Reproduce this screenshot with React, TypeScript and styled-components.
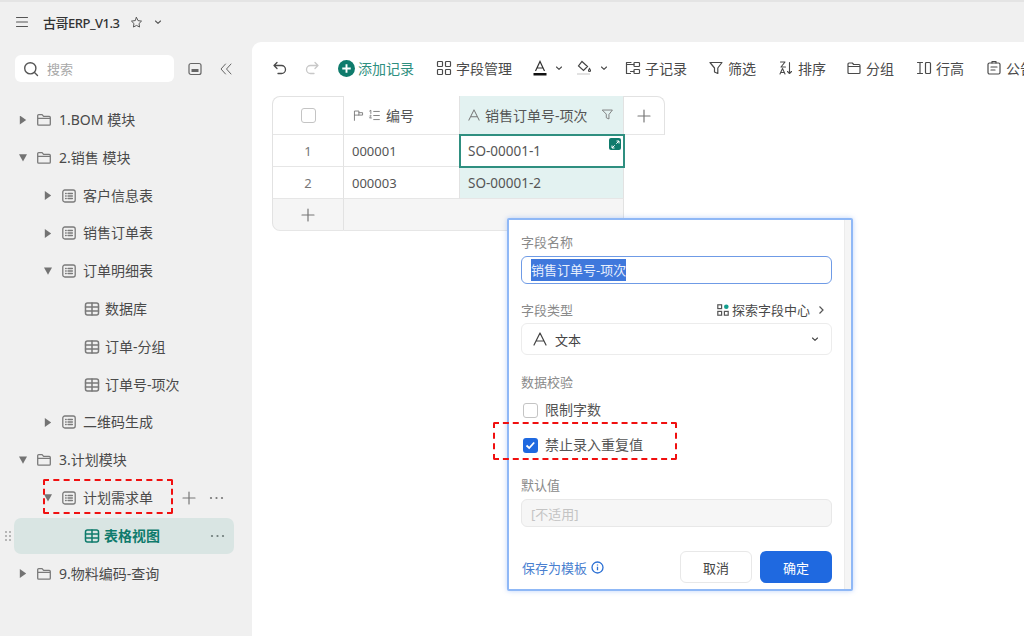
import React from 'react'
import styled, { createGlobalStyle } from 'styled-components'

const GlobalStyle = createGlobalStyle`
  html, body { margin: 0; padding: 0; height: 100%; overflow: hidden; background: #f0f0f0; }
  * { box-sizing: border-box; }
  body {
    font-family: "Noto Sans", "Noto Sans CJK SC", sans-serif;
    font-size: 14px;
    color: #3c3c3c;
  }
`

const Page = styled.div`
  position: relative;
  width: 1024px;
  height: 636px;
  overflow: hidden;
  display: flex;
  flex-direction: column;
  border-top: 2px solid #e4e4e4;
`

const TopBar = styled.header`
  height: 40px;
  flex: none;
  display: flex;
  align-items: center;
  padding: 0 0 0 15px;
  color: #555;
`

const BaseName = styled.span`
  margin-left: 14px;
  margin-right: 11px;
  font-size: 13px;
  font-weight: 500;
  letter-spacing: -0.5px;
  color: #333;
`

const TopChevron = styled.span`
  display: flex;
  margin-left: 10px;
`

const Body = styled.div`
  flex: 1;
  display: flex;
  min-height: 0;
`

const Sidebar = styled.aside`
  width: 252px;
  flex: none;
  position: relative;
`

const SearchRow = styled.div`
  display: flex;
  align-items: center;
  padding: 13px 0 0 15px;
  color: #666;
`

const SearchBox = styled.div`
  width: 159px;
  height: 27px;
  background: #fff;
  border-radius: 6px;
  display: flex;
  align-items: center;
  gap: 8px;
  padding-left: 8px;
  font-size: 13px;
  color: #555;
  margin-right: 14px;
`

const SearchHint = styled.span`
  color: #a8a8a8;
`

const CollapseBtn = styled.span`
  display: flex;
  margin-left: 17px;
`

const Tree = styled.nav`
  display: flex;
  flex-direction: column;
  gap: 7.8px;
  padding-top: 23px;
`

const Row = styled.div<{ $level: number; $active?: boolean }>`
  position: relative;
  height: ${({ $active }) => ($active ? '36px' : '30px')};
  margin: ${({ $active }) => ($active ? '-3px 18px -3px 14px' : '0')};
  padding-left: ${({ $level, $active }) =>
    $active ? '70px' : `${[19, 44, 84][$level]}px`};
  display: flex;
  align-items: center;
  color: ${({ $active }) => ($active ? '#0f7b6c' : '#4a4a4a')};
  font-weight: ${({ $active }) => ($active ? 700 : 400)};
  background: ${({ $active }) => ($active ? '#d9e5e3' : 'transparent')};
  border-radius: ${({ $active }) => ($active ? '7px' : '0')};
`

const Arrow = styled.span<{ $open?: boolean }>`
  width: 8px;
  height: 9px;
  flex: none;
  background: #737373;
  margin-right: 9px;
  clip-path: ${({ $open }) =>
    $open ? 'polygon(0 10%, 100% 10%, 50% 90%)' : 'polygon(10% 0, 90% 50%, 10% 100%)'};
`

const RowIcon = styled.span<{ $active?: boolean }>`
  display: flex;
  flex: none;
  margin-right: ${({ $active }) => ($active ? '6px' : '7px')};
  color: ${({ $active }) => ($active ? '#0f7b6c' : '#7a7a7a')};
`

const RowText = styled.span<{ $level: number }>`
  margin-left: ${({ $level }) => [0, -1, -2][$level]}px;
  padding-bottom: 2px;
  white-space: nowrap;
`

const RowActions = styled.div`
  position: absolute;
  left: 181px;
  top: 7px;
  display: flex;
  gap: 12px;
  align-items: center;
  color: #777;
`

const ActiveDots = styled.span`
  position: absolute;
  right: 9px;
  top: 16px;
  color: #6d7b79;
  display: flex;
`

const Grip = styled.span`
  position: absolute;
  left: -9px;
  top: 13px;
  display: flex;
  color: #9a9a9a;
`

const Main = styled.main`
  flex: 1;
  background: #fff;
  border-top-left-radius: 9px;
  min-width: 0;
  overflow: hidden;
`

const Toolbar = styled.div`
  height: 54px;
  display: flex;
  align-items: center;
  padding: 0 0 2px 20px;
  white-space: nowrap;
  color: #4a4a4a;
`

const ToolItem = styled.div<{ $gap?: number; $left: number; $accent?: boolean; $muted?: boolean }>`
  display: flex;
  align-items: center;
  flex: none;
  gap: ${({ $gap }) => $gap ?? 4}px;
  margin-left: ${({ $left }) => $left}px;
  color: ${({ $accent, $muted }) => ($accent ? '#2f8f80' : $muted ? '#c8c8c8' : '#4a4a4a')};
`

const SheetGrid = styled.div`
  margin-left: 20px;
  width: 393px;
  display: grid;
  grid-template-columns: 72px 116px 164px 41px;
  grid-template-rows: 39px 32px 32px 32px;
  font-size: 13px;
`

const Cell = styled.div<{
  $tint?: boolean
  $center?: boolean
  $selected?: boolean
  $grey?: boolean
  $tl?: boolean
  $tr?: boolean
  $bl?: boolean
  $corner?: boolean
  $wide?: boolean
}>`
  position: relative;
  display: flex;
  align-items: center;
  padding: ${({ $center }) => ($center ? '0' : '0 8px')};
  justify-content: ${({ $center }) => ($center ? 'center' : 'flex-start')};
  background: ${({ $tint, $grey }) => ($tint ? '#e3f2f1' : $grey ? '#f5f5f5' : '#fff')};
  color: ${({ $center }) => ($center ? '#777' : '#555')};
  border-right: 1px solid #e2e2e2;
  border-bottom: 1px solid #e6e6e6;
  border-top: ${({ $tl, $tr }) => ($tl || $tr ? '1px solid #e2e2e2' : 'none')};
  border-left: ${({ $tl, $bl }) => ($tl || $bl ? '1px solid #e2e2e2' : 'none')};
  border-top-left-radius: ${({ $tl }) => ($tl ? '8px' : '0')};
  border-top-right-radius: ${({ $tr }) => ($tr ? '8px' : '0')};
  border-bottom-left-radius: ${({ $corner }) => ($corner ? '8px' : '0')};
  ${({ $wide }) => ($wide ? 'grid-column: span 2;' : '')}
  ${({ $selected }) => ($selected ? 'outline: 2px solid #2f8f80; outline-offset: -1px; z-index: 1;' : '')}
`

const HeaderCellIcons = styled.span`
  display: flex;
  gap: 3px;
  color: #777;
`

const HeaderLabel = styled.span`
  margin-left: 5px;
  font-size: 14px;
  white-space: nowrap;
  color: #555;
`

const CodeText = styled.span`
  font-size: 13.5px;
`

const FilterMark = styled.span`
  position: absolute;
  right: 9px;
  top: 12px;
  color: #777;
  display: flex;
`

const ExpandBadge = styled.span`
  position: absolute;
  right: 2px;
  top: 3px;
  width: 12px;
  height: 12px;
  border-radius: 2px;
  background: #0f7b6c;
  display: flex;
  align-items: center;
  justify-content: center;
`

const Popover = styled.section`
  position: absolute;
  left: 507px;
  top: 216px;
  width: 346px;
  height: 373px;
  background: #fff;
  border: 2px solid #8fb8f6;
  box-shadow: 0 0 5px rgba(70, 130, 240, 0.35);
  border-radius: 2px;
  padding: 13px 19px 0 12px;
  &::after {
    content: '';
    position: absolute;
    top: 0;
    right: 0;
    bottom: 0;
    width: 6px;
    background: #f5f5f5;
    border-left: 1px solid #ececec;
  }
`

const FieldLabel = styled.div<{ $top?: number }>`
  font-size: 13px;
  line-height: 18px;
  color: #8a8a8a;
  margin-top: ${({ $top }) => $top ?? 0}px;
`

const NameInput = styled.div`
  height: 28px;
  margin-top: 5px;
  border: 1px solid #6f9be6;
  border-radius: 6px;
  display: flex;
  align-items: center;
  padding-left: 9px;
  font-size: 13px;
`

const Selection = styled.span`
  background: #3f78dc;
  color: #e8effc;
  line-height: 22px;
`

const LabelRow = styled.div`
  display: flex;
  justify-content: space-between;
  align-items: center;
  margin-top: 16px;
`

const ExploreLink = styled.div`
  display: flex;
  align-items: center;
  font-size: 13px;
  color: #4a4a4a;
  padding-right: 7px;
  gap: 3px;
`

const ExploreArrow = styled.svg`
  margin-left: 4px;
`

const TypeSelect = styled.div`
  height: 32px;
  margin-top: 4px;
  border: 1px solid #ececec;
  border-radius: 6px;
  display: flex;
  align-items: center;
  padding: 0 11px;
  font-size: 13px;
  color: #444;
  gap: 8px;
`

const Spacer = styled.span`
  flex: 1;
`

const CheckRow = styled.label<{ $top: number }>`
  display: flex;
  align-items: center;
  gap: 7px;
  margin-top: ${({ $top }) => $top}px;
  padding-left: 2px;
  font-size: 14px;
  line-height: 18px;
  color: #555;
`

const Tick = styled.span<{ $on?: boolean }>`
  width: 15px;
  height: 15px;
  border-radius: 3px;
  border: ${({ $on }) => ($on ? 'none' : '1px solid #c4c4c4')};
  background: ${({ $on }) => ($on ? '#1f69e0' : '#fff')};
  display: flex;
  align-items: center;
  justify-content: center;
  flex: none;
`

const DisabledInput = styled.div`
  height: 28px;
  margin-top: 5px;
  border: 1px solid #e8e8e8;
  border-radius: 6px;
  background: #f6f6f6;
  display: flex;
  align-items: center;
  padding-left: 9px;
  font-size: 13px;
  color: #c4c4c4;
`

const Footer = styled.div`
  display: flex;
  align-items: center;
  margin-top: 24px;
`

const TemplateLink = styled.div`
  display: flex;
  align-items: center;
  gap: 4px;
  font-size: 13px;
  color: #4a7fd0;
  margin-left: 1px;
  flex: 1;
`

const Btn = styled.button<{ $primary?: boolean }>`
  width: 72px;
  height: 32px;
  margin-left: ${({ $primary }) => ($primary ? '8px' : '0')};
  border-radius: 6px;
  font: inherit;
  font-size: 13px;
  border: ${({ $primary }) => ($primary ? 'none' : '1px solid #e8e8e8')};
  background: ${({ $primary }) => ($primary ? '#1f69e0' : '#fff')};
  color: ${({ $primary }) => ($primary ? '#fff' : '#444')};
`

const DashedBox = styled.div<{ $x: number; $y: number; $w: number; $h: number }>`
  position: absolute;
  left: ${({ $x }) => $x}px;
  top: ${({ $y }) => $y}px;
  width: ${({ $w }) => $w}px;
  height: ${({ $h }) => $h}px;
  border: 2px dashed #f01010;
  border-radius: 2px;
  pointer-events: none;
  z-index: 5;
`

const Svg: React.FC<{ size?: number; sw?: number; vb?: number; children: React.ReactNode }> = ({ size = 16, sw = 1.3, vb = 16, children }) => (
  <svg width={size} height={size} viewBox={`0 0 ${vb} ${vb}`} fill="none" stroke="currentColor" strokeWidth={sw} strokeLinecap="round" strokeLinejoin="round">
    {children}
  </svg>
)

const Folder = () => (
  <Svg>
    <path d="M1.7 12.2V3.6c0-.6.4-1 1-1h3.4l1.5 1.8h5.7c.6 0 1 .4 1 1v6.8c0 .6-.4 1-1 1H2.7c-.6 0-1-.4-1-1zM1.7 6.4h12.6" />
  </Svg>
)
const SheetIcon = () => (
  <Svg>
    <rect x="1.8" y="2" width="12.4" height="12" rx="2" />
    <path d="M4.6 5.5h.6M7 5.5h4.4M4.6 8h.6M7 8h4.4M4.6 10.5h.6M7 10.5h4.4" />
  </Svg>
)
const GridIcon = () => (
  <Svg sw={1.5}>
    <rect x="1.5" y="2" width="13" height="12" rx="2" />
    <path d="M1.5 6h13M1.5 10h13M8 2v12" />
  </Svg>
)
const Chevron = ({ size = 10 }: { size?: number }) => (
  <Svg size={size} vb={10} sw={1.1}>
    <path d="M2.5 4l2.5 2.4L7.5 4" />
  </Svg>
)
const Plus = ({ size = 16 }: { size?: number }) => (
  <Svg size={size} sw={1.2}>
    <path d="M8 2v12M2 8h12" />
  </Svg>
)
const Dots = () => (
  <svg width="15" height="4" viewBox="0 0 15 4" fill="currentColor">
    <circle cx="2" cy="2" r="1.1" />
    <circle cx="7.5" cy="2" r="1.1" />
    <circle cx="13" cy="2" r="1.1" />
  </svg>
)
const LetterA = ({ size = 14 }: { size?: number }) => (
  <Svg size={size} vb={14} sw={1.2}>
    <path d="M1 13L7 1l6 12M3.2 9h7.600" />
  </Svg>
)

const App: React.FC = () => (
  <Page>
    <GlobalStyle />
    <TopBar>
      <Svg size={14} vb={14} sw={1.1}>
        <path d="M1.5 2.5h11M1.5 7h11M1.5 11.5h11" />
      </Svg>
      <BaseName>古哥ERP_V1.3</BaseName>
      <Svg size={13} sw={1.2}>
        <path d="M8 1.8l1.9 3.9 4.3.6-3.1 3 .7 4.3L8 11.6l-3.8 2 .7-4.3-3.1-3 4.3-.6z" />
      </Svg>
      <TopChevron><Chevron /></TopChevron>
    </TopBar>
    <Body>
      <Sidebar>
        <SearchRow>
          <SearchBox>
            <Svg sw={1.4}>
              <circle cx="7.3" cy="7.3" r="5.6" />
              <path d="M11.5 11.5l3 3" />
            </Svg>
            <SearchHint>搜索</SearchHint>
          </SearchBox>
          <Svg size={14} vb={14} sw={1.2}>
            <rect x="1" y="1.5" width="12" height="11" rx="2" />
            <rect x="3.5" y="7" width="7" height="3" fill="currentColor" stroke="none" />
          </Svg>
          <CollapseBtn>
            <Svg size={14} vb={14} sw={1}>
              <path d="M6.5 2L2 7l4.5 5M12 2L7.5 7l4.5 5" />
            </Svg>
          </CollapseBtn>
        </SearchRow>
        <Tree>
          <Row $level={0}><Arrow /><RowIcon><Folder /></RowIcon><RowText $level={0}>1.BOM 模块</RowText></Row>
          <Row $level={0}><Arrow $open /><RowIcon><Folder /></RowIcon><RowText $level={0}>2.销售 模块</RowText></Row>
          <Row $level={1}><Arrow /><RowIcon><SheetIcon /></RowIcon><RowText $level={1}>客户信息表</RowText></Row>
          <Row $level={1}><Arrow /><RowIcon><SheetIcon /></RowIcon><RowText $level={1}>销售订单表</RowText></Row>
          <Row $level={1}><Arrow $open /><RowIcon><SheetIcon /></RowIcon><RowText $level={1}>订单明细表</RowText></Row>
          <Row $level={2}><RowIcon><GridIcon /></RowIcon><RowText $level={2}>数据库</RowText></Row>
          <Row $level={2}><RowIcon><GridIcon /></RowIcon><RowText $level={2}>订单-分组</RowText></Row>
          <Row $level={2}><RowIcon><GridIcon /></RowIcon><RowText $level={2}>订单号-项次</RowText></Row>
          <Row $level={1}><Arrow /><RowIcon><SheetIcon /></RowIcon><RowText $level={1}>二维码生成</RowText></Row>
          <Row $level={0}><Arrow $open /><RowIcon><Folder /></RowIcon><RowText $level={0}>3.计划模块</RowText></Row>
          <Row $level={1}>
            <Arrow $open /><RowIcon><SheetIcon /></RowIcon><RowText $level={1}>计划需求单</RowText>
            <RowActions><Plus /><Dots /></RowActions>
          </Row>
          <Row $level={2} $active>
            <Grip>
              <svg width="6" height="10" viewBox="0 0 6 10" fill="currentColor">
                <circle cx="1" cy="1" r="0.9" /><circle cx="5" cy="1" r="0.9" />
                <circle cx="1" cy="5" r="0.9" /><circle cx="5" cy="5" r="0.9" />
                <circle cx="1" cy="9" r="0.9" /><circle cx="5" cy="9" r="0.9" />
              </svg>
            </Grip>
            <RowIcon $active><GridIcon /></RowIcon>
            <RowText $level={2}>表格视图</RowText>
            <ActiveDots><Dots /></ActiveDots>
          </Row>
          <Row $level={0}><Arrow /><RowIcon><Folder /></RowIcon><RowText $level={0}>9.物料编码-查询</RowText></Row>
        </Tree>
      </Sidebar>
      <Main>
        <Toolbar>
          <ToolItem $left={0}>
            <Svg><path d="M5 2.5L2 5.5l3 3M2 5.5h7.5a3.5 3.5 0 0 1 0 8H6" /></Svg>
          </ToolItem>
          <ToolItem $left={16} $muted>
            <Svg><path d="M11 2.5l3 3-3 3M14 5.5H6.5a3.5 3.5 0 0 0 0 8H10" /></Svg>
          </ToolItem>
          <ToolItem $left={18} $gap={3} $accent>
            <svg width="17" height="17" viewBox="0 0 16 16">
              <circle cx="8" cy="8" r="8" fill="#0f7b6c" />
              <path d="M8 4v8M4 8h8" stroke="#fff" strokeWidth="1.8" />
            </svg>
            添加记录
          </ToolItem>
          <ToolItem $left={22}>
            <Svg sw={1.2}>
              <rect x="1.5" y="1.5" width="5" height="5" rx="0.8" /><rect x="9.5" y="1.5" width="5" height="5" rx="0.8" />
              <rect x="1.5" y="9.5" width="5" height="5" rx="0.8" /><rect x="9.5" y="9.5" width="5" height="5" rx="0.8" />
            </Svg>
            字段管理
          </ToolItem>
          <ToolItem $left={21} $gap={7}>
            <svg width="14" height="16" viewBox="0 0 14 16" fill="none" stroke="#333" strokeWidth="1.2">
              <path d="M2.5 11L7 1.5 11.5 11M4.2 8h5.600" />
              <rect x="0.5" y="13" width="13" height="2.5" fill="#111" stroke="none" />
            </svg>
            <Chevron />
          </ToolItem>
          <ToolItem $left={12} $gap={7}>
            <svg width="16" height="16" viewBox="0 0 16 16" fill="none" stroke="#444" strokeWidth="1.2">
              <path d="M6 1.5l5.5 5-4 4L2.5 6zM13.5 8.5c.7 1 1 1.5 1 2a1 1 0 0 1-2 0c0-.5.3-1 1-2z" />
              <rect x="1" y="13" width="13" height="2" fill="#e2e2e2" stroke="none" />
            </svg>
            <Chevron />
          </ToolItem>
          <ToolItem $left={16}>
            <Svg sw={1.2}>
              <path d="M1.5 2.5h4.500M1.500 2.500v11h4" />
              <rect x="9" y="2.5" width="5.5" height="4" rx="0.8" /><rect x="9" y="9.5" width="5.5" height="4" rx="0.8" />
              <path d="M1.500 4.500H9M5.500 11.500H9" />
            </Svg>
            子记录
          </ToolItem>
          <ToolItem $left={21}>
            <Svg sw={1.2}><path d="M2 2.5h12L9.800 8v5.500L6.500 12V8z" /></Svg>
            筛选
          </ToolItem>
          <ToolItem $left={22}>
            <Svg sw={1.1}>
              <path d="M2.5 2h4.500L3 7h4.500M2 14l2.500-5.500L7 14M3 12.500h3M11.500 2.500v11M9.500 11.500l2 2 2-2" />
            </Svg>
            排序
          </ToolItem>
          <ToolItem $left={20}>
            <Svg sw={1.2}><path d="M2 12.500V4c0-.6.4-1 1-1h3.300l1.400 1.500H13c.6 0 1 .4 1 1v7c0 .6-.4 1-1 1H3c-.6 0-1-.4-1-1zM2 6.500h12" /></Svg>
            分组
          </ToolItem>
          <ToolItem $left={22}>
            <Svg sw={1.2}><path d="M1.500 2.500h5M1.500 13.500h5M4 2.500v11" /><rect x="9.5" y="2.5" width="5" height="11" rx="1" /></Svg>
            行高
          </ToolItem>
          <ToolItem $left={22}>
            <Svg sw={1.2}>
              <rect x="2" y="3" width="12" height="11" rx="1.5" /><path d="M6 3V1.500h4V3M5 7h6M5 10h4" />
            </Svg>
            公告
          </ToolItem>
        </Toolbar>
        <SheetGrid>
          <Cell $center $tl>
            <Tick />
          </Cell>
          <Cell>
            <HeaderCellIcons>
              <Svg size={13} sw={1.1}><path d="M3 14V2.500h5.500v5H3M8.500 4.500H13v3H8.500" /></Svg>
              <Svg size={13} sw={1.1}><path d="M7 3h7M7 8h7M7 13h7M2 2.500l1.500-1v4M2 8.500c.5-1 2-1 2 0 0 .8-2 1.500-2 2.500h2.200" /></Svg>
            </HeaderCellIcons>
            <HeaderLabel>编号</HeaderLabel>
          </Cell>
          <Cell $tint>
            <HeaderCellIcons><LetterA size={12} /></HeaderCellIcons>
            <HeaderLabel>销售订单号-项次</HeaderLabel>
            <FilterMark>
              <Svg size={13} sw={1.1}><path d="M2 2.500h12L9.800 8v5.500L6.500 12V8z" /></Svg>
            </FilterMark>
          </Cell>
          <Cell $center $tr><Plus /></Cell>

          <Cell $center $bl>1</Cell>
          <Cell>000001</Cell>
          <Cell $selected>
            <CodeText>SO-00001-1</CodeText>
            <ExpandBadge>
              <svg width="9" height="9" viewBox="0 0 9 9" fill="none" stroke="#fff" strokeWidth="1">
                <path d="M1 8l2.700-2.700M1 5.500V8h2.500M8 1L5.300 3.700M5.500 1H8v2.500" />
              </svg>
            </ExpandBadge>
          </Cell>
          <span />

          <Cell $center $bl>2</Cell>
          <Cell>000003</Cell>
          <Cell $tint><CodeText>SO-00001-2</CodeText></Cell>
          <span />

          <Cell $center $grey $bl $corner><Plus /></Cell>
          <Cell $grey $wide />
        </SheetGrid>
      </Main>
    </Body>

    <Popover>
      <FieldLabel>字段名称</FieldLabel>
      <NameInput><Selection>销售订单号-项次</Selection></NameInput>
      <LabelRow>
        <FieldLabel>字段类型</FieldLabel>
        <ExploreLink>
          <svg width="12" height="12" viewBox="0 0 12 12" fill="none" stroke="#555" strokeWidth="1.2">
            <rect x="0.8" y="0.8" width="3.8" height="3.8" /><rect x="0.8" y="7.4" width="3.8" height="3.8" /><rect x="7.4" y="7.4" width="3.8" height="3.8" />
            <circle cx="9.3" cy="2.7" r="2.3" fill="#149e8e" stroke="none" />
          </svg>
          探索字段中心
          <ExploreArrow width="8" height="10" viewBox="0 0 8 10" fill="none" stroke="#555" strokeWidth="1.2"><path d="M2.5 1.5L6 5 2.5 8.5" /></ExploreArrow>
        </ExploreLink>
      </LabelRow>
      <TypeSelect>
        <LetterA />
        文本
        <Spacer />
        <Chevron />
      </TypeSelect>
      <FieldLabel $top={18}>数据校验</FieldLabel>
      <CheckRow $top={10}><Tick />限制字数</CheckRow>
      <CheckRow $top={17}>
        <Tick $on>
          <svg width="11" height="9" viewBox="0 0 11 9" fill="none" stroke="#fff" strokeWidth="1.8"><path d="M1.5 4.5L4.2 7l5-5.500" /></svg>
        </Tick>
        禁止录入重复值
      </CheckRow>
      <FieldLabel $top={22}>默认值</FieldLabel>
      <DisabledInput>[不适用]</DisabledInput>
      <Footer>
        <TemplateLink>
          保存为模板
          <svg width="13" height="13" viewBox="0 0 13 13" fill="none" stroke="#2a6fd4" strokeWidth="1.3">
            <circle cx="6.5" cy="6.5" r="5.5" /><path d="M6.5 5.8v3.500M6.500 3.400v1.200" />
          </svg>
        </TemplateLink>
        <Btn>取消</Btn>
        <Btn $primary>确定</Btn>
      </Footer>
    </Popover>

    <DashedBox $x={43} $y={477} $w={130} $h={35} />
    <DashedBox $x={493} $y={420} $w={184} $h={38} />
  </Page>
)

export default App
